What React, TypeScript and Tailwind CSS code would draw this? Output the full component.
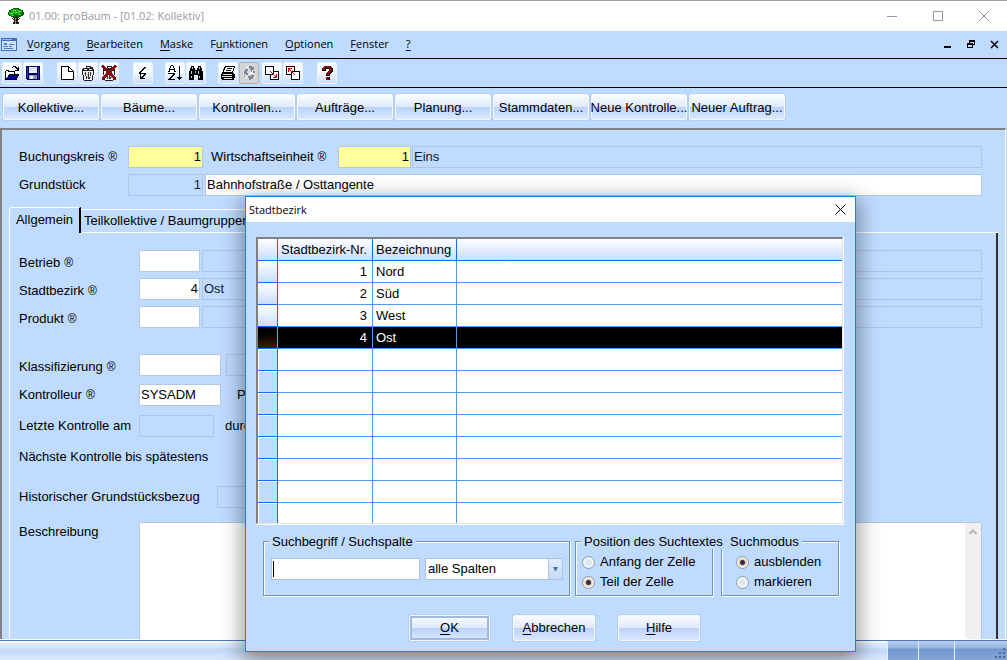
import { useState } from "react";
import type { ReactNode } from "react";

const buttonFace =
  "bg-[linear-gradient(to_bottom,#fafcff_0%,#dfeafd_48%,#bcd4fb_52%,#d9e8ff_100%)] border border-[#f4f9ff] rounded-[2px] shadow-[0_0_0_1px_#b2cff8]";

const menus = [
  ["", "V", "organg"],
  ["", "B", "earbeiten"],
  ["", "M", "aske"],
  ["F", "u", "nktionen"],
  ["", "O", "ptionen"],
  ["", "F", "enster"],
  ["", "?", ""],
];

const shortcuts = [
  "Kollektive...",
  "Bäume...",
  "Kontrollen...",
  "Aufträge...",
  "Planung...",
  "Stammdaten...",
  "Neue Kontrolle...",
  "Neuer Auftrag...",
];

const districts = [
  { nr: 1, name: "Nord" },
  { nr: 2, name: "Süd" },
  { nr: 3, name: "West" },
  { nr: 4, name: "Ost" },
];

function Icon({ children }: { children: ReactNode }) {
  return (
    <svg width="16" height="16" viewBox="0 0 16 16" fill="none" shapeRendering="crispEdges" aria-hidden="true">
      {children}
    </svg>
  );
}

function TreeIcon() {
  return (
    <svg width="16" height="17" viewBox="0 0 16 17" shapeRendering="crispEdges" aria-hidden="true">
      <path d="M5 0h6v1h2v1h2v2h1v3h-1v1h-2v1h-2v1H5V9H3V8H1V7H0V4h1V2h2V1h2z" fill="#075a07" />
      <path d="M5 1h5v1h3v1h1v2h-2v2H9V6H6v2H3V7H1V4h2V2h2z" fill="#10b010" />
      <path d="M5 2h3v1H5zM10 3h3v1h-3zM2 5h3v1H2zM7 4h2v1H7zM11 6h2v1h-2zM4 7h1v1H4z" fill="#5fe03a" />
      <path d="M6 9h4v5h1v2H5v-2h1z" fill="#2b1a05" />
      <path d="M7 10h1v6H7z" fill="#b97b23" />
      <path d="M4 10h1v1h1v1H5v-1H4zM11 10h1v1h-1v1h-1v-1h1z" fill="#2b1a05" />
    </svg>
  );
}

function OpenIcon() {
  return (
    <Icon>
      <path d="M9 1h3v1h1v1h1V2h1v4h-4V5h2V4h-1V3h-1V2H9v1H8V2h1z" fill="#000" />
      <path d="M1 15V6h1V5h3v1h6v3h4v2h-1v2h-1v2z" fill="#000" />
      <path d="M2 6h2v1h6v2H5v1H4v2H3v1H2z" fill="#fff" />
      <path d="M5 10h9v1h-1v2h-1v1H3v-1h1v-2h1z" fill="#000084" />
    </Icon>
  );
}

function SaveIcon() {
  return (
    <Icon>
      <path d="M1 1h14v14H2v-1H1z" fill="#000062" />
      <path d="M2 2h1v11H2zM13 2h1v12h-1z" fill="#3434a6" />
      <path d="M4 2h8v6H4z" fill="#f4f6ff" />
      <path d="M4 3h8v1H4zM4 5h8v1H4z" fill="#cbd3ea" />
      <path d="M4 10h8v4H4z" fill="#8f96b4" />
      <path d="M5 11h3v3H5z" fill="#fff" />
    </Icon>
  );
}

function NewIcon() {
  return (
    <Icon>
      <path d="M2 1h8v1h1v1h1v1h1v1h1v1h1v9H2z" fill="#000" />
      <path d="M3 2h6v5h5v7H3zM10 3v3h3V5h-1V4h-1V3z" fill="#fff" />
    </Icon>
  );
}

function TrashIcon({ crossed = false }: { crossed?: boolean }) {
  return (
    <Icon>
      <path d="M3 6h10v4h-1v5H4v-5H3z" fill="#f4f4f4" />
      <path d="M6 1h5v1h2v2h1v2H2V4h1V3h3z" fill="#202020" />
      <path d="M7 2h3v1H7zM4 4h3v1H4zM9 4h3v1H9z" fill="#e4e4e4" />
      <path d="M2 6h1v4H2zM13 6h1v4h-1zM3 10h1v5H3zM12 10h1v5h-1zM4 15h8v1H4z" fill="#202020" />
      <path d="M5 7h1v4H5zM6 11h1v3H6zM8 7h1v7H8zM10 7h1v4h-1zM9 12h1v2H9z" fill="#383838" />
      <path d="M4 8h1v1H4zM7 9h1v1H7zM11 8h1v1h-1zM7 12h1v1H7zM10 12h1v1h-1z" fill="#9a9a9a" />
      {crossed && <path d="M1 1l14 14M2 1l13 13M15 1L1 15M14 1L1 14" stroke="#8b0a12" strokeWidth="1.5" />}
    </Icon>
  );
}

function FlashIcon() {
  return (
    <Icon>
      <path d="M9 2h2v1h-1v1H9v1H8v1H7v1H6v1h5v2h-1v1H9v1H8v1h2v1H5V9h1v3h1v-1h1v-1h1V9H4V7h1V6h1V5h1V4h1V3h1z" fill="#000" />
    </Icon>
  );
}

function SortIcon() {
  return (
    <Icon>
      <path d="M4 0h2v1H4zM3 1h1v2H3zM6 1h1v2H6zM2 3h1v3H2zM7 3h1v3H7zM3 4h4v1H3zM1 6h2v1H1zM7 6h2v1H7z" fill="#000" />
      <path d="M1 8h7v2H7v1H6v1H5v1H4v1h4v1H1v-1h1v-1h1v-1h1v-1h1v-1h1V9H1z" fill="#000" />
      <path d="M12 1h1v11h2v1h-1v1h-1v1h-1v-1h-1v-1h-1v-1h2z" fill="#000" />
    </Icon>
  );
}

function FindIcon() {
  return (
    <Icon>
      <path d="M3 1h3v2h1v2h2V3h1V1h3v2h1v3h1v9h-5v-5H6v5H1V6h1V3h1z" fill="#000" />
      <path d="M4 2h1v2H4zM11 2h1v2h-1zM3 6h1v3H3zM10 6h1v3h-1zM7 6h1v2H7zM3 11h1v2H3zM11 11h1v2h-1z" fill="#b9c8dc" />
    </Icon>
  );
}

function PrintIcon() {
  return (
    <Icon>
      <path d="M5 1h10v2h-1v3h-1v2H2V7h1V4h1V2h1z" fill="#000" />
      <path d="M6 2h8v1h-1v3h-1v1H4V5h1V3h1z" fill="#fff" />
      <path d="M7 3h5v1H7zM6 5h5v1H6z" fill="#000" />
      <path d="M2 8h12v1h1v4h-1v2H2v-1H1V9h1z" fill="#000" />
      <path d="M3 9h9v1H3zM2 11h10v1H2zM4 13h8v1H4z" fill="#e4e4e4" />
    </Icon>
  );
}

function GlobeIcon() {
  return (
    <Icon>
      <path d="M6 1h5v1h2v2h1v3h1v4h-1v2h-2v1h-1v1H6v-1H4v-2H3v-2H2V6h1V4h1V2h2z" fill="#d9dcdf" />
      <path d="M8 1h3v1h2v3h-2v2h-1V5H9V3H8zM4 4h3v2H6v2h1v2H5V9H3V6h1zM12 6h2v2h-2zM7 11h3v-1h3v2h-1v2h-2v1H8v-2H7z" fill="#7b8792" />
      <path d="M5 2h2v1H5zM9 7h3v2H9zM5 11h1v2H5z" fill="#fff" />
      <path d="M3 10h1v2H3zM11 9h1v1h-1z" fill="#9ba4ad" />
    </Icon>
  );
}

function CopyIcon({ back = false }: { back?: boolean }) {
  return (
    <Icon>
      {back ? (
        <>
          <path d="M1.500 1.500h8v8h-8z" fill="#fff" stroke="#000" />
          <path d="M6.500 6.500h8v8h-8z" fill="#fff" stroke="#000" />
          <path d="M3 3h4v1H5v1h1v1h1v1h1v1h1v1h1v1H9V9H8V8H7V7H6V6H5V5H4v2H3z" fill="#e00000" />
        </>
      ) : (
        <>
          <path d="M6.500 6.500h8v8h-8z" fill="#fff" stroke="#000" />
          <path d="M1.500 1.500h8v8h-8z" fill="#fff" stroke="#000" />
          <path d="M6 6h1v1h1v1h1v1h1v1h1v1h1V9h1v4H9v-1h2v-1h-1v-1H9V9H8V8H7V7H6z" fill="#e00000" />
        </>
      )}
    </Icon>
  );
}

function HelpIcon() {
  return (
    <Icon>
      <path d="M5 1h7v1h1v1h1v4h-1v1h-1v1h-1v2H7V8h1V7h1V6h1V4H7v2H3V3h1V2h1zM7 12h4v3H7z" fill="#000" />
      <path d="M5 1h6v1h1v1h1v3h-1v1h-1v1h-1v2H7V8h1V7h1V6h1V3H6v2H3V3h1V2h1zM7 12h3v3H7z" fill="#8b0a12" />
    </Icon>
  );
}

const toolGroups = [
  { gap: "mr-[14px]", tools: [{ name: "Öffnen", icon: <OpenIcon /> }, { name: "Speichern", icon: <SaveIcon /> }] },
  {
    gap: "mr-[14px]",
    tools: [
      { name: "Neu", icon: <NewIcon /> },
      { name: "Löschen", icon: <TrashIcon /> },
      { name: "Alle löschen", icon: <TrashIcon crossed /> },
    ],
  },
  { gap: "mr-3", tools: [{ name: "Ausführen", icon: <FlashIcon /> }] },
  { gap: "mr-3", tools: [{ name: "Sortieren", icon: <SortIcon /> }, { name: "Suchen", icon: <FindIcon /> }] },
  { gap: "mr-[3px]", tools: [{ name: "Drucken", icon: <PrintIcon /> }, { name: "Karte", icon: <GlobeIcon />, off: true }] },
  { gap: "mr-[14px]", tools: [{ name: "Weiter", icon: <CopyIcon /> }, { name: "Zurück", icon: <CopyIcon back /> }] },
  { gap: "", tools: [{ name: "Hilfe", icon: <HelpIcon /> }] },
];

function Field({
  label,
  value = "",
  className = "",
  tone = "white",
}: {
  label: string;
  value?: string;
  className?: string;
  tone?: "white" | "yellow" | "flat";
}) {
  const tones = {
    white: "bg-white border-[#b4c7e4]",
    yellow: "bg-[#ffff99] border-[#b4c7e4]",
    flat: "bg-transparent border-[#aec5e6] text-[#0a1c38]",
  };
  return (
    <input
      aria-label={label}
      defaultValue={value}
      readOnly={tone === "flat"}
      className={`h-[22px] min-w-0 border px-px pb-[2px] outline-none ${tones[tone]} ${className}`}
    />
  );
}

function Label({
  children,
  mark = false,
  className = "w-[120px] pt-1",
}: {
  children: ReactNode;
  mark?: boolean;
  className?: string;
}) {
  return (
    <span className={`shrink-0 whitespace-nowrap ${className}`}>
      {children}
      {mark && <span className="ml-1 text-[12px]">®</span>}
    </span>
  );
}

function Radio({ name, label, checked = false }: { name: string; label: string; checked?: boolean }) {
  return (
    <label className="flex h-5 items-center gap-[5px] whitespace-nowrap">
      <input
        type="radio"
        name={name}
        defaultChecked={checked}
        className="size-[13px] appearance-none rounded-full border border-[#8e9aa8] bg-[radial-gradient(circle,#dbe6f0_0_30%,#f6f9fc_60%)] shadow-[inset_0_0_0_1px_#f4f4f4] checked:bg-[radial-gradient(circle,#1f3154_0_2px,#f3c9a4_3px,#f6ece2_5px)]"
      />
      {label}
    </label>
  );
}

function Group({ title, className, children }: { title: string; className: string; children: ReactNode }) {
  return (
    <fieldset
      className={`h-[62px] min-w-0 border border-[#6a94cf] shadow-[1px_1px_0_#fff,inset_1px_1px_0_#fff] ${className}`}
    >
      <legend className="relative ml-[5px] h-[15px] bg-[#bfdbff] px-[3px] leading-[15px] whitespace-nowrap">{title}</legend>
      {children}
    </fieldset>
  );
}

function PickDialog() {
  const [selected, setSelected] = useState(4);
  const line = "border-r border-b border-[#4d9bf5]";
  const head = "border-r border-b border-[#0f6ff0] bg-linear-to-b from-white to-[#c9ddfb] px-[3px] font-normal";

  return (
    <div
      role="dialog"
      aria-label="Stadtbezirk"
      className="absolute top-[196px] left-[245px] w-[611px] border border-[#1c83d8] bg-[#bfdbff] shadow-[0_6px_20px_3px_rgba(0,0,0,0.4)]"
    >
      <div className="flex h-[25px] items-center justify-between bg-white pr-[7px] pl-[3px] font-['Open_Sans',sans-serif] text-[11px]">
        <h2>Stadtbezirk</h2>
        <button type="button" aria-label="Schließen" className="flex size-4 items-center justify-center">
          <svg width="11" height="11" viewBox="0 0 11 11" stroke="#000" aria-hidden="true">
            <path d="M.5.500l10 10M10.500.500l-10 10" />
          </svg>
        </button>
      </div>

      <div className="mt-[15px] mr-[11px] ml-[10px] h-[288px] overflow-hidden border-r border-b border-white">
        <div className="h-full overflow-hidden border-t-2 border-l-2 border-r border-b border-t-[#808080] border-l-[#808080] border-r-[#e3e3e3] border-b-[#e3e3e3] bg-white">
          <table className="w-full table-fixed border-separate border-spacing-0">
            <thead>
              <tr className="h-[22px]">
                <th className={`w-5 ${head}`} />
                <th className={`w-[95px] text-left whitespace-nowrap ${head}`}>Stadtbezirk-Nr.</th>
                <th className={`w-[84px] text-left whitespace-nowrap ${head}`}>Bezeichnung</th>
                <th className="border-b border-[#0f6ff0] bg-linear-to-b from-white to-[#c9ddfb]" />
              </tr>
            </thead>
            <tbody>
              {districts.map((d) => (
                <tr
                  key={d.nr}
                  onClick={() => setSelected(d.nr)}
                  className={`h-[22px] ${selected === d.nr ? "bg-black text-white" : "bg-white"}`}
                >
                  <td
                    className={`border-r border-b bg-linear-to-b ${
                      selected === d.nr
                        ? "border-r-[#f08a1c] border-b-[#0f6ff0] from-black to-[#3c2206]"
                        : "border-[#0f6ff0] from-white to-[#c9ddfb]"
                    }`}
                  />
                  <td className={`pr-[5px] text-right ${line}`}>{d.nr}</td>
                  <td className={`pl-[3px] ${line}`}>{d.name}</td>
                  <td className="border-b border-[#4d9bf5]" />
                </tr>
              ))}
              {Array.from({ length: 8 }, (_, i) => (
                <tr key={i} className="h-[22px]">
                  <td className="border-r border-b border-[#0f6ff0] bg-[#bfdbff] shadow-[inset_1px_1px_0_#fff]" />
                  <td className={line} />
                  <td className={line} />
                  <td className="border-b border-[#4d9bf5]" />
                </tr>
              ))}
            </tbody>
          </table>
        </div>
      </div>

      <div className="mt-[9px] ml-[17px] flex">
        <Group title="Suchbegriff / Suchspalte" className="w-[307px]">
          <div className="mt-[9px] flex gap-[5px] pl-[7px]">
            <div className="flex h-[22px] w-[149px] items-center border border-[#a9c2e6] bg-white pl-px">
              <span className="h-4 w-px bg-black" />
              <input aria-label="Suchbegriff" className="min-w-0 flex-1 outline-none" />
            </div>
            <div className="relative">
              <select
                aria-label="Suchspalte"
                className="h-[22px] w-[138px] appearance-none border border-[#a9c2e6] bg-white pl-[2px] outline-none"
              >
                <option>alle Spalten</option>
              </select>
              <span className="pointer-events-none absolute top-px right-px flex h-5 w-[14px] items-center justify-center border-l border-[#a9c2e6] bg-linear-to-b from-[#e3edfb] to-[#c3d9f8]">
                <svg width="5" height="4" viewBox="0 0 5 4" fill="#4572ad" aria-hidden="true">
                  <path d="M0 0h5L3 4H2z" />
                </svg>
              </span>
            </div>
          </div>
        </Group>
        <Group title="Position des Suchtextes" className="ml-[5px] w-[138px]">
          <div className="mt-[3px] pl-[6px]">
            <Radio name="position" label="Anfang der Zelle" />
            <Radio name="position" label="Teil der Zelle" checked />
          </div>
        </Group>
        <Group title="Suchmodus" className="ml-2 w-[118px]">
          <div className="mt-[3px] pl-[14px]">
            <Radio name="modus" label="ausblenden" checked />
            <Radio name="modus" label="markieren" />
          </div>
        </Group>
      </div>

      <div className="mt-[19px] mb-[10px] flex gap-[23px] pl-[163px]">
        <button type="button" className={`h-[26px] w-[81px] ${buttonFace}`}>
          <span className="flex h-full items-center justify-center border-2 border-[#9fb9df]">
            <u className="underline-offset-2">O</u>K
          </span>
        </button>
        <button type="button" className={`h-[26px] w-[82px] ${buttonFace}`}>
          <u className="underline-offset-2">A</u>bbrechen
        </button>
        <button type="button" className={`h-[26px] w-[82px] ${buttonFace}`}>
          <u className="underline-offset-2">H</u>ilfe
        </button>
      </div>
    </div>
  );
}

export default function App() {
  return (
    <div className="relative flex h-screen flex-col overflow-hidden bg-[#bfdbff] font-['Liberation_Sans',Arial,sans-serif] text-[13px] leading-4 text-black">
      <header className="flex h-[31px] shrink-0 items-center border-t border-[#a0a0a0] bg-white pr-[18px] pl-2 font-['Open_Sans',sans-serif] text-[11px] text-[#999]">
        <TreeIcon />
        <h1 className="ml-[5px] flex-1">01.00: proBaum - [01.02: Kollektiv]</h1>
        <div className="flex gap-9">
          <button type="button" aria-label="Minimieren">
            <svg width="10" height="10" viewBox="0 0 10 10" stroke="#999" aria-hidden="true">
              <path d="M0 5.500h10" />
            </svg>
          </button>
          <button type="button" aria-label="Maximieren">
            <svg width="10" height="10" viewBox="0 0 10 10" stroke="#999" fill="none" aria-hidden="true">
              <path d="M.5.500h9v9h-9z" />
            </svg>
          </button>
          <button type="button" aria-label="Beenden">
            <svg width="10" height="10" viewBox="0 0 10 10" stroke="#999" aria-hidden="true">
              <path d="M0 0l10 10M10 0L0 10" />
            </svg>
          </button>
        </div>
      </header>

      <nav className="flex h-7 shrink-0 items-center border-b border-black pr-2 pb-px pl-px font-['Open_Sans',sans-serif] text-[11px]">
        <svg width="16" height="13" viewBox="0 0 16 13" shapeRendering="crispEdges" aria-hidden="true">
          <path d="M0 0h16v13H0z" fill="#3f6fb4" />
          <path d="M1 3h14v9H1z" fill="#cfe2fa" />
          <path d="M1 1h10v1H1z" fill="#8fb6ea" />
          <path d="M3 5h3v2H3zM2 8h5v1H2zM8 6h5v1H8zM8 8h3v1H8zM3 10h9v1H3z" fill="#4f7fbf" />
        </svg>
        <div className="ml-[10px] flex flex-1 gap-[17px]">
          {menus.map(([pre, key, post]) => (
            <button type="button" key={key + post}>
              {pre}
              <u className="underline-offset-2">{key}</u>
              {post}
            </button>
          ))}
        </div>
        <div className="flex items-center gap-[15px]">
          <button type="button" aria-label="Fenster minimieren">
            <svg width="8" height="9" viewBox="0 0 8 9" aria-hidden="true">
              <path d="M0 6h7v2H0z" />
            </svg>
          </button>
          <button type="button" aria-label="Fenster wiederherstellen">
            <svg width="8" height="9" viewBox="0 0 8 9" shapeRendering="crispEdges" aria-hidden="true">
              <path d="M2 0h6v5H6V4h1V2H3v1H2zM0 3h6v5H0zM1 5v2h4V5z" fillRule="evenodd" />
            </svg>
          </button>
          <button type="button" aria-label="Fenster schließen">
            <svg width="9" height="9" viewBox="0 0 9 9" stroke="#000" strokeWidth="1.5" aria-hidden="true">
              <path d="M1 1l7 7M8 1L1 8" />
            </svg>
          </button>
        </div>
      </nav>

      <div role="toolbar" className="flex h-[29px] shrink-0 items-center border-b border-black pl-[2px]">
        {toolGroups.map((group, i) => (
          <div key={i} className={`flex gap-px ${group.gap}`}>
            {group.tools.map((tool) => (
              <button
                type="button"
                key={tool.name}
                aria-label={tool.name}
                className={`flex h-[22px] w-5 items-center justify-center rounded-[2px] border ${
                  tool.off
                    ? "border-[#b5b5b5] bg-[#d4d4d4]"
                    : "border-[#eaf3ff] bg-linear-to-b from-[#f8fbff] from-45% to-[#c8dcfb]"
                }`}
              >
                {tool.icon}
              </button>
            ))}
          </div>
        ))}
      </div>

      <div className="flex h-10 shrink-0 gap-[2px] pt-[6px] pl-[3px]">
        {shortcuts.map((text) => (
          <button type="button" key={text} className={`h-[26px] w-24 pt-px text-center whitespace-nowrap ${buttonFace}`}>
            <span className="-mx-1">{text}</span>
          </button>
        ))}
      </div>

      <main className="mr-px flex min-h-0 flex-1 flex-col border-t-2 border-r border-l-2 border-t-[#808080] border-r-white border-l-[#808080]">
        <div className="mt-4 mr-[23px] flex items-center pl-[17px]">
          <Label mark className="w-[109px]">
            Buchungskreis
          </Label>
          <Field label="Buchungskreis" value="1" tone="yellow" className="w-[75px] text-right" />
          <Label mark className="ml-2 w-[127px]">
            Wirtschaftseinheit
          </Label>
          <Field label="Wirtschaftseinheit" value="1" tone="yellow" className="w-[73px] text-right" />
          <Field label="Bezeichnung Wirtschaftseinheit" value="Eins" tone="flat" className="ml-px flex-1" />
        </div>
        <div className="mt-[6px] mr-[23px] flex items-center pl-[17px]">
          <Label className="w-[109px]">Grundstück</Label>
          <Field label="Grundstück Nr." value="1" tone="flat" className="w-[75px] text-right" />
          <Field label="Grundstück" value="Bahnhofstraße / Osttangente" className="ml-[2px] flex-1" />
        </div>

        <div role="tablist" className="mt-[11px] mr-[7px] ml-[7px] flex shrink-0 items-end">
          <button
            type="button"
            role="tab"
            aria-selected="true"
            className="h-[26px] w-[72px] rounded-tl-[3px] border-t border-r-2 border-l border-t-white border-r-black border-l-white pb-[2px] text-center"
          >
            <span className="-mx-1">Allgemein</span>
          </button>
          <button
            type="button"
            role="tab"
            aria-selected="false"
            className="h-6 border-t border-b border-white pr-2 pl-[3px] whitespace-nowrap"
          >
            Teilkollektive / Baumgruppen
          </button>
          <div className="flex-1 border-b border-white" />
        </div>

        <section className="mr-[7px] ml-[7px] flex min-h-0 flex-1 flex-col border-r-2 border-l border-r-[#303030] border-l-white pt-[17px] pr-[14px] pl-[9px]">
          <div className="flex flex-col gap-[6px]">
            <div className="flex items-center">
              <Label mark>Betrieb</Label>
              <Field label="Betrieb" className="w-[61px]" />
              <Field label="Betrieb Bezeichnung" tone="flat" className="ml-[2px] flex-1" />
            </div>
            <div className="flex items-center">
              <Label mark>Stadtbezirk</Label>
              <Field label="Stadtbezirk" value="4" className="w-[61px] text-right" />
              <Field label="Stadtbezirk Bezeichnung" value="Ost" tone="flat" className="ml-[2px] flex-1" />
            </div>
            <div className="flex items-center">
              <Label mark>Produkt</Label>
              <Field label="Produkt" className="w-[61px]" />
              <Field label="Produkt Bezeichnung" tone="flat" className="ml-[2px] flex-1" />
            </div>
          </div>
          <div className="mt-[26px] flex items-center">
            <Label mark>Klassifizierung</Label>
            <Field label="Klassifizierung" className="w-[82px]" />
            <Field label="Klassifizierung Bezeichnung" tone="flat" className="ml-[5px] w-[400px]" />
          </div>
          <div className="mt-2 flex items-center">
            <Label mark className="w-[120px]">
              Kontrolleur
            </Label>
            <Field label="Kontrolleur" value="SYSADM" className="w-[82px]" />
            <Label className="ml-4">Prüfer</Label>
          </div>
          <div className="mt-[9px] flex items-center">
            <Label className="w-[120px]">Letzte Kontrolle am</Label>
            <Field label="Letzte Kontrolle am" tone="flat" className="w-[75px]" />
            <Label className="ml-[11px]">durch</Label>
          </div>
          <div className="mt-[9px] flex h-[22px] items-center">
            <Label className="">Nächste Kontrolle bis spätestens</Label>
          </div>
          <div className="mt-[18px] flex items-center">
            <Label className="w-[198px]">Historischer Grundstücksbezug</Label>
            <Field label="Historischer Grundstücksbezug" tone="flat" className="w-[400px]" />
          </div>
          <div className="mt-[14px] flex min-h-0 flex-1">
            <label htmlFor="beschreibung" className="w-[120px] shrink-0 pt-[2px]">
              Beschreibung
            </label>
            <div className="flex flex-1 border border-b-0 border-[#b4c7e4] bg-white">
              <textarea id="beschreibung" className="flex-1 resize-none outline-none" />
              <div className="flex w-4 justify-center bg-[#f0f0f0] pt-[6px]">
                <svg width="8" height="6" viewBox="0 0 8 6" fill="none" stroke="#b8b8b8" strokeWidth="2" aria-hidden="true">
                  <path d="M.5 5L4 1.500 7.500 5" />
                </svg>
              </div>
            </div>
          </div>
        </section>
      </main>

      <footer className="flex h-[21px] shrink-0 border-t border-white">
        <div className="flex flex-1 border-t border-[#4d78b5] bg-[linear-gradient(to_bottom,#fff_0,#dbe9fc_3px,#d3e4fb_7px,#bfd8f8_8px,#dbe9fc_100%)]">
          <div className="flex-1" />
          <div className="flex bg-[linear-gradient(to_bottom,#b5cdf0_0,#98b6e2_7px,#7396cc_8px,#84a6d8_100%)]">
            <div className="w-[31px] border-l border-[#e4eefc]" />
            <div className="w-[36px] border-l border-[#e4eefc]" />
            <div className="flex w-[53px] items-end justify-end border-l border-[#e4eefc] pr-px pb-px">
              <svg width="11" height="11" viewBox="0 0 11 11" fill="#47689c" aria-hidden="true">
                <path d="M8 0h2v2H8zM8 4h2v2H8zM4 4h2v2H4zM8 8h2v2H8zM4 8h2v2H4zM0 8h2v2H0z" />
              </svg>
            </div>
          </div>
        </div>
      </footer>

      <PickDialog />
    </div>
  );
}
